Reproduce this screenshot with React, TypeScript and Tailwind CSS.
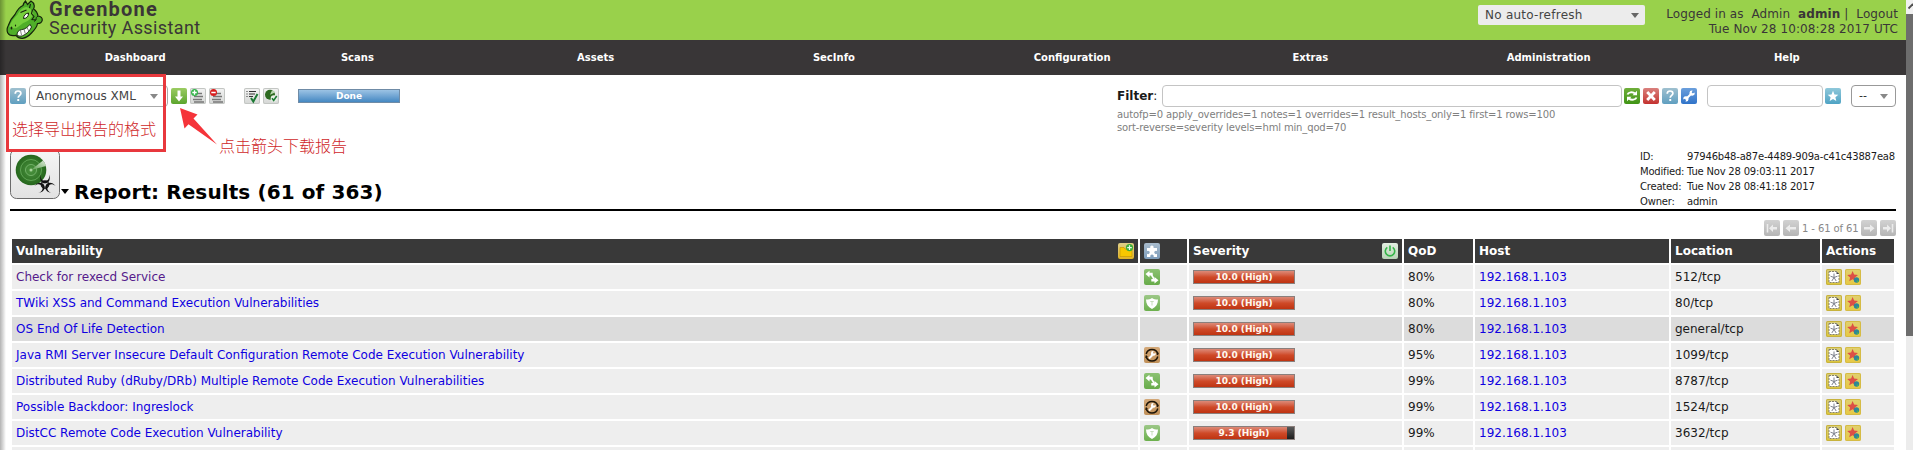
import React from "react";

const NAV = ["Scans", "Assets", "SecInfo", "Configuration", "Extras", "Administration", "Help"];

type Kind = "vendor" | "mitigate" | "workaround" | "none";

interface Result {
  name: string;
  kind: Kind;
  severity: number;
  qod: string;
  location: string;
  visited?: boolean;
  dark?: boolean;
}

const ROWS: Result[] = [
  { name: "Check for rexecd Service", kind: "vendor", severity: 10, qod: "80%", location: "512/tcp", visited: true },
  { name: "TWiki XSS and Command Execution Vulnerabilities", kind: "mitigate", severity: 10, qod: "80%", location: "80/tcp" },
  { name: "OS End Of Life Detection", kind: "none", severity: 10, qod: "80%", location: "general/tcp", dark: true },
  { name: "Java RMI Server Insecure Default Configuration Remote Code Execution Vulnerability", kind: "workaround", severity: 10, qod: "95%", location: "1099/tcp" },
  { name: "Distributed Ruby (dRuby/DRb) Multiple Remote Code Execution Vulnerabilities", kind: "vendor", severity: 10, qod: "99%", location: "8787/tcp" },
  { name: "Possible Backdoor: Ingreslock", kind: "workaround", severity: 10, qod: "99%", location: "1524/tcp" },
  { name: "DistCC Remote Code Execution Vulnerability", kind: "mitigate", severity: 9.3, qod: "99%", location: "3632/tcp" },
];

const COLS = "grid grid-cols-[1126px_47px_213px_69px_194px_149px_72px] gap-x-[2px]";

function Tile({ className, children }: { className: string; children?: React.ReactNode }) {
  return (
    <span className={"block h-4 w-4 shrink-0 overflow-hidden rounded-[2px] " + className}>
      <svg viewBox="0 0 16 16" className="block h-4 w-4" fill="none">
        {children}
      </svg>
    </span>
  );
}

const GRAY_TILE = "bg-linear-to-b from-[#f4f4f4] to-[#d5d7d5] shadow-[inset_0_0_0_1px_#c3c6c3]";

function HelpIcon() {
  return (
    <Tile className="bg-linear-to-b from-[#9fc0cf] to-[#5f9fc0]">
      <path d="M5.2 5.8C5.2 3.9 6.4 3 8 3s2.9.9 2.9 2.4C10.900 7.300 8.200 7.400 8.200 9.700" stroke="#fff" strokeWidth="1.7" />
      <rect x="7.300" y="11" width="1.900" height="2" fill="#fff" />
    </Tile>
  );
}

function DownloadIcon() {
  return (
    <Tile className="bg-linear-to-b from-[#9bcc62] to-[#5ba52c]">
      <path d="M6.500 2.500h3v6H12L8 13.500 4 8.500h2.500z" fill="#fff" />
    </Tile>
  );
}

function ListIcon({ add }: { add?: boolean }) {
  return (
    <Tile className={GRAY_TILE}>
      <path d="M7 5.500h5M4 8.500h9M3 11.500h9M4 14h10" stroke="#777" strokeWidth="1.300" />
      <circle cx="4.500" cy="4.500" r="3.500" fill={add ? "#35b44a" : "#d81e1e"} />
      <path d={add ? "M2.300 4.500h4.400M4.500 2.300v4.400" : "M2.300 4.500h4.400"} stroke="#fff" strokeWidth="1.300" />
    </Tile>
  );
}

function ResultsIcon() {
  return (
    <Tile className={GRAY_TILE}>
      <path d="M5 3.500h7M5 6h6M5 8.500h4" stroke="#333" strokeWidth="1.200" />
      <path d="M2.500 3.500h1M2.500 6h1M2.500 8.500h1" stroke="#333" strokeWidth="1.200" />
      <path d="M7 10l2.300 3.500L13.500 6" stroke="#1c7a34" strokeWidth="2" />
    </Tile>
  );
}

function TaskIcon() {
  return (
    <Tile className={GRAY_TILE}>
      <circle cx="7" cy="6.800" r="5" fill="#2d6a20" />
      <path d="M7 6.800L12 4.500A5 5 0 0 0 9 2.200z" fill="#b9d6b0" />
      <circle cx="11" cy="10.500" r="3.300" fill="#e9f1e6" />
      <path d="M9 10.300l1.700 2.200 3-4.500" stroke="#1c7a34" strokeWidth="1.600" />
    </Tile>
  );
}

function RefreshIcon() {
  return (
    <Tile className="bg-linear-to-b from-[#6fae3a] to-[#3f9413]">
      <path d="M3.500 6.500C4.200 4.300 8.500 3.200 11 5.500M12.500 9.500c-.7 2.200-5 3.300-7.500 1" stroke="#fff" strokeWidth="1.900" />
      <path d="M13 2.800v4.500H8.500zM3 13.200V8.700h4.500z" fill="#fff" />
    </Tile>
  );
}

function DeleteIcon() {
  return (
    <Tile className="bg-linear-to-b from-[#d9807d] to-[#c32f2f]">
      <path d="M4.200 4l7.600 8M11.800 4l-7.600 8" stroke="#fff" strokeWidth="2.800" />
    </Tile>
  );
}

function WrenchIcon() {
  return (
    <Tile className="bg-linear-to-b from-[#6b9fdc] to-[#2f73c9]">
      <path d="M4.500 11.500l6.500-6.500" stroke="#fff" strokeWidth="1.900" />
      <path d="M13.600 4.500a2.600 2.600 0 1 1-2-2L10.600 4.500l1 1zM2.400 11.500a2.600 2.600 0 1 1 2 2L5.400 11.500l-1-1z" fill="#fff" />
    </Tile>
  );
}

function StarIcon() {
  return (
    <Tile className="bg-linear-to-b from-[#8fc8da] to-[#4ea3c4]">
      <path d="M8 2.800l1.500 3.600 3.800.3-2.900 2.500.9 3.800L8 11l-3.300 2 .9-3.800-2.900-2.500 3.800-.3z" fill="#fff" />
    </Tile>
  );
}

function PagerIcon({ flip, bar }: { flip?: boolean; bar?: boolean }) {
  return (
    <Tile className="bg-linear-to-b from-[#d2d2d2] to-[#b5b5b5]">
      <g transform={flip ? "translate(16 0) scale(-1 1)" : undefined}>
        <path d={bar ? "M5 8.300L9 4.500v2.500h4v2.600H9V12z" : "M2.500 8.300L7 4.500v2.500h6v2.600H7V12z"} fill="#ececec" />
        {bar && <path d="M3.500 4v8.500" stroke="#ececec" strokeWidth="1.600" />}
      </g>
    </Tile>
  );
}

function FolderIcon() {
  return (
    <Tile className="bg-linear-to-b from-[#dfcf86] to-[#e2b51c]">
      <path d="M2 4.500h4l1 1.500h7v7.500H2z" fill="#f7c800" stroke="#c99a00" strokeWidth=".7" />
      <circle cx="11.500" cy="4.600" r="3.600" fill="#3cae3a" />
      <path d="M9.200 4.600h4.600M11.500 2.300v4.600" stroke="#eaffea" strokeWidth="1.200" />
    </Tile>
  );
}

function PuzzleIcon() {
  return (
    <Tile className="bg-linear-to-b from-[#a9bccd] to-[#7e9dbb]">
      <path d="M3 5h3.400a1.700 1.700 0 1 1 3 0H13v3a1.700 1.700 0 1 0 0 2.800V14H9.500a1.700 1.700 0 1 0-3 0H3v-3.200a1.700 1.700 0 1 0 0-2.800z" fill="#fff" />
    </Tile>
  );
}

function PowerIcon() {
  return (
    <Tile className="bg-linear-to-b from-[#e4efe2] to-[#b9d3b7]">
      <path d="M5.300 4.300a4.700 4.700 0 1 0 5.400 0" stroke="#35b548" strokeWidth="1.600" />
      <path d="M8 2.500v5.500" stroke="#35b548" strokeWidth="1.600" />
    </Tile>
  );
}

function SolutionIcon({ kind }: { kind: Kind }) {
  if (kind === "vendor")
    return (
      <Tile className="bg-linear-to-b from-[#8cc272] to-[#67ab49]">
        <path d="M1.500 5L5.500 1.800v2h3.200v2.600H5.500v2zM14.500 11.200L10.500 14.500v-2H7.300V9.900h3.200V8z" fill="#fff" />
        <path d="M7 5l3.500 6" stroke="#fff" strokeWidth="1.600" />
      </Tile>
    );
  if (kind === "mitigate")
    return (
      <Tile className="bg-linear-to-b from-[#9cc787] to-[#6cb04c]">
        <path d="M2 4.500C4.500 4.500 6.500 4 8 3c1.500 1 3.500 1.500 6 1.500C14 9 12 12 8 14 4 12 2 9 2 4.500z" fill="#fff" />
        <path d="M6.300 6.500h3.400M8 6.500v4" stroke="#c5dcb9" strokeWidth="1" />
      </Tile>
    );
  if (kind === "workaround")
    return (
      <Tile className="bg-linear-to-b from-[#d3a878] to-[#c09058]">
        <path d="M2.200 7A6 6 0 0 1 13.800 7M13.800 9.500A6 6 0 0 1 2.200 9.500" stroke="#1d1407" strokeWidth="1.500" />
        <path d="M14.800 5.500l-.7 3-2-1.500zM1.200 11l.7-3 2 1.500z" fill="#1d1407" />
        <path d="M5 11.500l3.500-3.500" stroke="#fff" strokeWidth="1.900" />
        <path d="M11.700 6a2.400 2.400 0 1 1-2-2l-.8 1.700.9 1z" fill="#fff" />
      </Tile>
    );
  return null;
}

function NoteIcon() {
  return (
    <Tile className="bg-linear-to-b from-[#d9cf7c] to-[#dcc637] shadow-[inset_0_0_0_1px_#c7b23c]">
      <path d="M3 2.500h7.500L13 5v8.500H3z" fill="#fff" stroke="#77756a" strokeWidth=".9" strokeDasharray="2 1" />
      <path d="M10.500 2.500V5H13z" fill="#444" />
      <path d="M8 4.500v4M8 8.500L4.500 7.200M8 8.500l3.500-1.300M8 8.500l-2.200 3.500M8 8.500l2.200 3.500" stroke="#7d818c" strokeWidth="1" />
    </Tile>
  );
}

function OverrideIcon() {
  return (
    <Tile className="bg-linear-to-b from-[#e0d070] to-[#e8c840] shadow-[inset_0_0_0_1px_#d5bb45]">
      <path d="M7.600 2l1.500 3.500 3.900.4-3 2.500.9 3.900-3.300-2-3.400 2 .9-3.900-2.900-2.500 3.900-.4z" fill="#dc5046" />
      <circle cx="11.500" cy="11" r="2.700" fill="#2f8698" />
      <path d="M11.500 11l2.500 1.200-1.700 1.400z" fill="#4cb848" />
    </Tile>
  );
}

function HorseLogo() {
  return (
    <svg viewBox="0 0 38 40" className="h-10 w-[38px] shrink-0" fill="none">
      <path
        d="M17 5.500C17.500 3.500 18.500 2 19.500 1l2 3.500L25 1c1.800 1 3 2.500 3.200 4.500.2 1.500-.2 2.500-.7 3.500 2.500 1.500 4 4 4.500 7 3 .3 4.500 2 4.200 4.300C35.700 22.500 34 23.500 31.500 23.500c-.5 3.500-3 6.500-6 9.500-2.500 2.800-5.500 4.800-9 5.300-3 .2-5-1-6.500-3C6 36 3 35.500 1.800 33 .6 30.500 1 28 2.300 25.500 3.500 21.500 6 17.500 9 14.500 11 10.500 13.500 7 17 5.500z"
        fill="#4fae28"
        stroke="#15240c"
        strokeWidth="1.200"
      />
      <path d="M11.500 14.500C13.500 10.500 16.500 7.500 20.500 7c3.500.8 6 3.500 7 7-2 4-4.500 6.500-8 8-4 1.200-6 4.500-9 6-2.500.8-5 .2-7.200-1C4.500 22 8 18 11.500 14.500z" fill="#76cf3c" />
      <path d="M11 35c0-3 1.500-4.800 4.500-5.300 4-.6 6.300-2.700 8.500-5.300l1.500 2.600c-2 4.300-4.800 7-8.800 8.700-2 .8-4.200.5-5.700-.7z" fill="#fff" stroke="#15240c" strokeWidth=".9" />
      <path d="M14.500 30.500l1 4.500M18 29.200l1.300 4.500M21 27.500l1.800 3.500" stroke="#333" strokeWidth=".6" />
      <path d="M17.500 18.500c.2-3 1.700-5 5-5.500.2 3.200-1.500 5.600-5 5.500z" fill="#fff" stroke="#15240c" strokeWidth="1" />
      <path d="M14.500 12.500l6-2.500M26.500 9.500l-1 4 2.500 3-2 3 4 .5M24.500 4l-1 4" stroke="#15240c" strokeWidth="1.100" />
      <path d="M32 16c-1.500.8-2.200 2-1.700 3.500l-2.300 2" stroke="#15240c" strokeWidth="1" />
      <ellipse cx="5.500" cy="28" rx=".9" ry="1.600" fill="#15240c" />
      <ellipse cx="9.500" cy="25.500" rx=".6" ry="1.100" fill="#15240c" />
    </svg>
  );
}

function RadarIcon() {
  return (
    <svg viewBox="0 0 50 50" className="h-[50px] w-[50px] shrink-0" fill="none">
      <defs>
        <linearGradient id="tile" x1="0" y1="0" x2="0" y2="1">
          <stop offset="0" stopColor="#f6f6f6" />
          <stop offset="1" stopColor="#e2e2e2" />
        </linearGradient>
        <radialGradient id="dish">
          <stop offset="0" stopColor="#4c9440" />
          <stop offset="1" stopColor="#25661c" />
        </radialGradient>
        <linearGradient id="sweep" x1="0" y1="1" x2="1" y2="0">
          <stop offset="0" stopColor="#5b9c4e" />
          <stop offset="1" stopColor="#dcebd8" />
        </linearGradient>
      </defs>
      <rect x=".5" y=".5" width="49" height="49" rx="6" fill="url(#tile)" stroke="#6b6b6b" />
      <circle cx="21" cy="21" r="15.300" fill="url(#dish)" />
      <circle cx="21" cy="21" r="10.500" stroke="#5fa454" strokeWidth="1" />
      <circle cx="21" cy="21" r="5.500" stroke="#72b268" strokeWidth="1" />
      <path d="M21 21L33 11.500A15.300 15.300 0 0 1 36 17z" fill="url(#sweep)" />
      <circle cx="21" cy="21" r="1.500" fill="#a8d49c" />
      <g fill="#111">
        <path d="M31 25.500c-2 4.500 0 9 4 9s6-4.500 4-9c.8 4-1 6.500-4 6.500s-4.800-2.500-4-6.500z" />
        <path d="M31 25.500c-2 4.500 0 9 4 9s6-4.500 4-9c.8 4-1 6.500-4 6.500s-4.800-2.500-4-6.500z" transform="rotate(120 35 35.500)" />
        <path d="M31 25.500c-2 4.500 0 9 4 9s6-4.500 4-9c.8 4-1 6.500-4 6.500s-4.800-2.500-4-6.500z" transform="rotate(240 35 35.500)" />
      </g>
      <circle cx="35" cy="35.500" r="3.800" stroke="#111" strokeWidth="1.100" />
      <circle cx="35" cy="35.500" r="1" fill="#ddd" />
    </svg>
  );
}

function Caret({ className }: { className: string }) {
  return (
    <svg viewBox="0 0 8 5" className={"shrink-0 " + className}>
      <path d="M0 0h8L4 5z" fill="currentColor" />
    </svg>
  );
}

function SeverityBar({ value }: { value: number }) {
  return (
    <div className="relative h-[14px] w-[102px] border border-[#8a7f7c] bg-linear-to-b from-[#5a5a5a] to-[#1e1e1e]">
      <div className="h-full bg-linear-to-b from-[#dc8a78] via-[#cf4a28] to-[#bf3310]" style={{ width: value * 10 + "%" }} />
      <span className="absolute inset-0 text-center text-[9px] leading-[12px] font-bold text-[#fff7ee]">
        {value.toFixed(1)} (High)
      </span>
    </div>
  );
}

export default function App() {
  const head = "flex items-center justify-between bg-[#393939] px-1 text-[12px] font-bold text-white";
  return (
    <div className="relative flex h-[450px] w-[1913px] overflow-hidden bg-white font-['DejaVu_Sans',sans-serif] text-[#1a1a1a]">
      <div className="flex w-[1906px] shrink-0 flex-col">
        <header className="flex h-10 shrink-0 justify-between bg-[#99d14b] pl-[6px] text-[#3a3637]">
          <div className="flex">
            <HorseLogo />
            <div className="flex flex-col pl-[5px] font-['Roboto',sans-serif] whitespace-nowrap">
              <span className="text-[20px] leading-[19px] font-bold tracking-[1.2px]">Greenbone</span>
              <span className="text-[18px] leading-[18px] tracking-[0.4px]">Security Assistant</span>
            </div>
          </div>
          <div className="flex pr-2">
            <div className="mt-[5px] flex h-5 w-[167px] items-center justify-between rounded-[2px] bg-[#ececec] pr-[6px] pl-[7px] text-[12px] tracking-[0.25px] text-[#444]">
              No auto-refresh
              <Caret className="h-[5px] w-2 text-[#666]" />
            </div>
            <div className="mt-[7px] w-[253px] text-right text-[12px] leading-[15px] tracking-[0.1px] whitespace-pre">
              <div>Logged in as  Admin  <b>admin</b> |  Logout</div>
              <div>Tue Nov 28 10:08:28 2017 UTC</div>
            </div>
          </div>
        </header>

        <nav className="grid h-[35px] shrink-0 grid-cols-8 items-center bg-[#393637] text-center text-[10px] font-bold text-white">
          <span className="pl-8">Dashboard</span>
          {NAV.map((n) => (
            <span key={n}>{n}</span>
          ))}
        </nav>

        <section className="flex h-[76px] shrink-0 justify-between pr-[10px] pl-[10px]">
          <div className="flex h-8 items-start pt-[10px]">
            <div className="flex items-center gap-[3px]">
              <HelpIcon />
              <div className="flex h-[22px] w-[139px] items-center justify-between rounded-[4px] border border-[#aaa] pr-[9px] pl-[6px] text-[12px] text-[#444]">
                Anonymous XML
                <Caret className="h-[5px] w-2 text-[#888]" />
              </div>
              <DownloadIcon />
              <ListIcon add />
              <ListIcon />
              <div className="ml-4 flex gap-[3px]">
                <ResultsIcon />
                <TaskIcon />
              </div>
              <div className="ml-4 h-[14px] w-[102px] border border-[#6f8ba6] bg-linear-to-b from-[#9cc3e4] to-[#4488c2] text-center text-[9px] leading-[12px] font-bold text-white">
                Done
              </div>
            </div>
          </div>

          <div className="flex w-[779px] flex-col pt-[10px]">
            <div className="flex h-[22px] items-center">
              <span className="w-[45px] text-[12px] whitespace-nowrap">
                <b>Filter</b>:
              </span>
              <div className="h-[22px] w-[460px] rounded-[4px] border border-[#c4c4c4]" />
              <div className="ml-[2px] flex gap-[3px]">
                <RefreshIcon />
                <DeleteIcon />
                <HelpIcon />
                <WrenchIcon />
              </div>
              <div className="mr-[2px] ml-[10px] h-[22px] w-[116px] rounded-[4px] border border-[#c4c4c4]" />
              <StarIcon />
              <div className="ml-[10px] flex h-[22px] w-[45px] items-center justify-between rounded-[4px] border border-[#999] pr-[7px] pl-[7px] text-[11px] text-[#222]">
                --
                <Caret className="h-[5px] w-2 text-[#888]" />
              </div>
            </div>
            <div className="mt-px text-[10px] leading-[13px] tracking-[-0.145px] text-[#808080]">
              autofp=0 apply_overrides=1 notes=1 overrides=1 result_hosts_only=1 first=1 rows=100
              <br />
              sort-reverse=severity levels=hml min_qod=70
            </div>
          </div>
        </section>

        <section className="mr-[10px] ml-[10px] flex h-[60px] shrink-0 justify-between border-b-2 border-black">
          <div className="-mt-[2px] flex h-[50px]">
            <RadarIcon />
            <Caret className="mt-[40px] ml-px h-[5px] w-2 text-black" />
            <h1 className="mt-[31px] ml-[5px] text-[20px] leading-[24px] font-bold tracking-[0.1px] whitespace-nowrap text-black">
              Report: Results (61 of 363)
            </h1>
          </div>
          <dl className="-mt-[2px] grid h-[60px] w-[256px] grid-cols-[47px_209px] text-[10px] leading-[15px] tracking-[-0.2px] whitespace-nowrap">
            <dt>ID:</dt>
            <dd>97946b48-a87e-4489-909a-c41c43887ea8</dd>
            <dt>Modified:</dt>
            <dd>Tue Nov 28 09:03:11 2017</dd>
            <dt>Created:</dt>
            <dd>Tue Nov 28 08:41:18 2017</dd>
            <dt>Owner:</dt>
            <dd>admin</dd>
          </dl>
        </section>

        <div className="flex h-7 shrink-0 items-center justify-end gap-[3px] pt-[8px] pr-[10px] pb-[2px] text-[#888]">
          <PagerIcon bar />
          <PagerIcon />
          <span className="w-14 text-center text-[10px] tracking-[-0.1px] whitespace-nowrap">1 - 61 of 61</span>
          <PagerIcon flip />
          <PagerIcon flip bar />
        </div>

        <div className="flex flex-col gap-[2px] pl-3">
          <div className={COLS + " h-6"}>
            <div className={head}>
              Vulnerability
              <FolderIcon />
            </div>
            <div className={head}>
              <PuzzleIcon />
            </div>
            <div className={head}>
              Severity
              <PowerIcon />
            </div>
            <div className={head}>QoD</div>
            <div className={head}>Host</div>
            <div className={head}>Location</div>
            <div className={head}>Actions</div>
          </div>
          {ROWS.map((r) => {
            const cell = "flex items-center px-1 text-[12px] whitespace-nowrap " + (r.dark ? "bg-[#dcdcdc]" : "bg-[#eeeeee]");
            return (
              <div key={r.name} className={COLS + " h-6"}>
                <div className={cell + (r.visited ? " text-[#551a8b]" : " text-[#0f00e0]")}>{r.name}</div>
                <div className={cell}>
                  <SolutionIcon kind={r.kind} />
                </div>
                <div className={cell}>
                  <SeverityBar value={r.severity} />
                </div>
                <div className={cell}>{r.qod}</div>
                <div className={cell + " text-[#0f00e0]"}>192.168.1.103</div>
                <div className={cell}>{r.location}</div>
                <div className={cell + " gap-[3px]"}>
                  <NoteIcon />
                  <OverrideIcon />
                </div>
              </div>
            );
          })}
          <div className={COLS + " h-6"}>
            {[0, 1, 2, 3, 4, 5, 6].map((i) => (
              <div key={i} className="bg-[#eeeeee]" />
            ))}
          </div>
        </div>
      </div>

      <div className="flex w-[7px] shrink-0 flex-col bg-[#ececec]">
        <div className="flex h-[14px] items-center justify-center overflow-hidden bg-[#f1f1f1]">
          <svg viewBox="0 0 7 14" className="h-[14px] w-[7px]" fill="none">
            <path d="M2.500 8.500L7 4" stroke="#505050" strokeWidth="1.800" />
          </svg>
        </div>
        <div className="h-[322px] bg-[#6d6d6d]" />
      </div>

      <div className="absolute inset-y-0 left-0 w-[6px] bg-linear-to-r from-black/30 to-transparent" />
      <div className="absolute top-[74px] left-[6px] h-[78px] w-[160px] border-[3px] border-[#e8383d]" />
      <div className="absolute top-[117px] left-[12px] font-['Noto_Sans_CJK_SC',sans-serif] text-[16px] leading-[22px] font-light whitespace-nowrap text-[#cf1f2a]">
        选择导出报告的格式
      </div>
      <div className="absolute top-[134px] left-[219px] font-['Noto_Sans_CJK_SC',sans-serif] text-[16px] leading-[22px] font-light whitespace-nowrap text-[#cf1f2a]">
        点击箭头下载报告
      </div>
      <svg viewBox="0 0 40 40" className="absolute top-[106px] left-[179px] h-10 w-10">
        <path d="M1 2l17.500 6.500-4 4L38 38.500 9.500 18.200 5.500 22.500z" fill="#f5343a" />
      </svg>
    </div>
  );
}
